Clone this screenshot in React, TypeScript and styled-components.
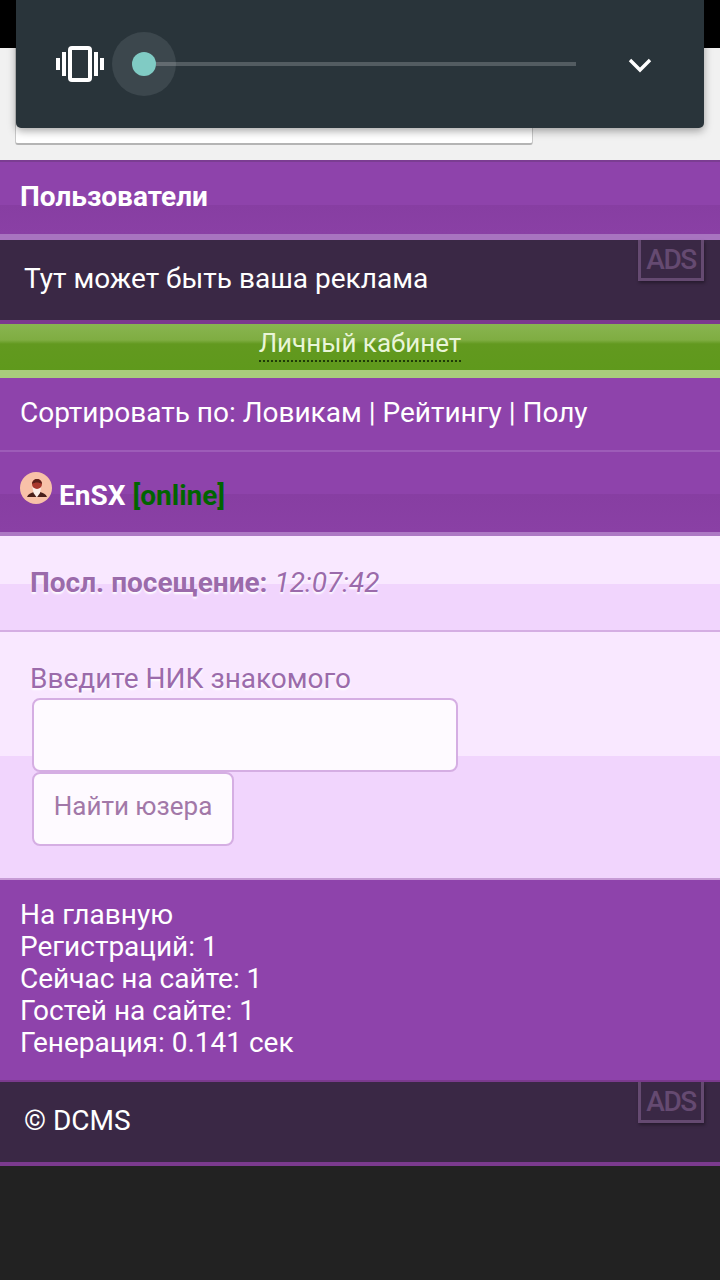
import styled, { createGlobalStyle } from 'styled-components';

const Global = createGlobalStyle`
  html, body { margin: 0; padding: 0; background: #222222; }
  * { box-sizing: border-box; }
  body { font-family: Roboto, "Noto Sans", sans-serif; }
`;

const Page = styled.div`
  position: relative;
  width: 720px;
  height: 1280px;
  overflow: hidden;
  background: #222222;
  color: #fff;
`;

const StatusBar = styled.div`
  height: 48px;
  background: #000;
`;

const SearchArea = styled.div`
  height: 112px;
  background: #f1f1f1;
  padding: 0 187px 0 15px;
`;

const SearchField = styled.div`
  height: 97px;
  background: #fff;
  border: 1px solid #c8c8c8;
  border-top: 0;
  border-bottom: 2px solid #b4b4b4;
  border-radius: 0 0 3px 3px;
`;

const VolumePanel = styled.div`
  position: absolute;
  top: 0;
  left: 16px;
  width: 688px;
  height: 128px;
  background: #29343a;
  border-radius: 0 0 5px 5px;
  box-shadow: 0 3px 8px rgba(0, 0, 0, 0.35);
  display: flex;
  align-items: center;
  padding-left: 40px;
`;

const Slider = styled.div`
  position: relative;
  width: 464px;
  height: 4px;
  margin-left: 8px;
  flex: none;
`;

const Halo = styled.div`
  position: absolute;
  left: 0;
  top: -30px;
  width: 64px;
  height: 64px;
  border-radius: 50%;
  background: #3c474d;
  display: flex;
  align-items: center;
  justify-content: center;
`;

const Thumb = styled.div`
  width: 24px;
  height: 24px;
  border-radius: 50%;
  background: #80cbc4;
`;

const SliderLine = styled.div`
  position: absolute;
  left: 44px;
  top: 0;
  right: 0;
  height: 4px;
  background: rgba(255, 255, 255, 0.2);
`;

const Chevron = styled.svg`
  margin-left: 52px;
  margin-top: 2px;
  flex: none;
`;

const Header = styled.div`
  height: 74px;
  border-top: 2px solid #7b3d92;
  background: linear-gradient(#8e43ab 0 43px, #873ea2 43px, #8a40a5 100%);
  padding: 19px 20px 0;
  font-size: 28px;
  line-height: 32px;
  font-weight: 700;
`;

const Strip = styled.div<{ $h: number; $c: string }>`
  height: ${(p) => p.$h}px;
  background: ${(p) => p.$c};
`;

const Banner = styled.div`
  position: relative;
  height: 80px;
  background: #3a2845;
  padding: 0 0 3px 24px;
  display: flex;
  align-items: center;
  font-size: 28px;
`;

const AdsBadge = styled.div`
  position: absolute;
  top: 0;
  right: 16px;
  width: 66px;
  height: 41px;
  border: 3px solid #654a71;
  border-top: 0;
  box-shadow: 1px 2px 3px rgba(0, 0, 0, 0.35);
  color: #654a71;
  font-size: 28px;
  font-weight: 500;
  letter-spacing: -1.5px;
  line-height: 40px;
  text-align: center;
`;

const CabinetBar = styled.div`
  height: 46px;
  background: linear-gradient(#89b550 0, #7fad42 16px, #62991f 20px, #5f991c 100%);
  text-align: center;
  font-size: 26px;
  line-height: 38px;
  color: #e9f5d8;
`;

const CabinetLink = styled.span`
  display: inline-block;
  height: 38px;
  border-bottom: 2px dotted #1f3a08;
`;

const SortRow = styled.div`
  height: 72px;
  background: #8e43ab;
  padding-left: 20px;
  font-size: 28px;
  line-height: 70px;
`;

const UserRow = styled.div`
  height: 80px;
  background: linear-gradient(#8e43ab 0 42px, #873ea2 42px, #8a40a5 100%);
  padding: 20px 0 0 20px;
  display: flex;
  font-size: 28px;
  font-weight: 700;
`;

const Nick = styled.span`
  margin-left: 7px;
  line-height: 47px;
`;

const Online = styled.span`
  margin-left: 7px;
  line-height: 47px;
  color: #006400;
`;

const LightBlock = styled.div<{ $h: number; $split: number }>`
  height: ${(p) => p.$h}px;
  background: linear-gradient(#f9e8ff 0 ${(p) => p.$split}px, #f1d5fd ${(p) => p.$split}px 100%);
  color: #9b6bab;
  font-size: 28px;
  text-shadow: 0 2px 2px #fff;
`;

const SeenLine = styled.div`
  padding: 31px 0 0 30px;
  line-height: 32px;
  b { font-weight: 700; }
  i { font-weight: 400; }
`;

const FindForm = styled.div`
  padding: 30px 0 0 30px;
`;

const FindLabel = styled.div`
  line-height: 34px;
  height: 36px;
`;

const FindInput = styled.div`
  margin-left: 2px;
  width: 426px;
  height: 74px;
  background: #fefaff;
  border: 2px solid #d5aee3;
  border-radius: 8px;
`;

const FindButton = styled.div`
  margin-left: 2px;
  width: 202px;
  height: 74px;
  padding-bottom: 6px;
  background: #fefaff;
  border: 2px solid #d5aee3;
  border-radius: 8px;
  color: #a278a8;
  text-shadow: none;
  display: flex;
  align-items: center;
  justify-content: center;
  font-size: 26px;
`;

const Stats = styled.div`
  height: 200px;
  background: #8e43ab;
  padding: 19px 0 0 20px;
  font-size: 28px;
  line-height: 32px;
`;

function VibrateIcon() {
  return (
    <svg width="48" height="36" viewBox="0 0 48 36" fill="none">
      <rect x="0" y="12" width="4" height="12" fill="#fff" />
      <rect x="6" y="6" width="4" height="24" fill="#fff" />
      <rect x="14" y="2" width="20" height="32" rx="2" stroke="#fff" strokeWidth="4" />
      <rect x="38" y="6" width="4" height="24" fill="#fff" />
      <rect x="44" y="12" width="4" height="12" fill="#fff" />
    </svg>
  );
}

function Avatar() {
  return (
    <svg width="32" height="32" viewBox="0 0 32 32">
      <circle cx="16" cy="16" r="16" fill="#f8c1a8" />
      <path d="M7 25c1-3 4-4 7-5h6c3 1 6 2 7 5z" fill="#4a1f1a" />
      <path d="M12.5 15h8.5l-1 6-3.2 4.5L13.5 21z" fill="#fbeee8" />
      <circle cx="17" cy="12" r="5" fill="#a8382e" />
      <path d="M12 12a5 5 0 0 1 10 0c-3-2-7-2-10 0z" fill="#5a1f1a" />
    </svg>
  );
}

export default function App() {
  return (
    <Page>
      <Global />
      <StatusBar />
      <SearchArea>
        <SearchField />
      </SearchArea>
      <VolumePanel>
        <VibrateIcon />
        <Slider>
          <Halo>
            <Thumb />
          </Halo>
          <SliderLine />
        </Slider>
        <Chevron width="24" height="16" viewBox="0 0 24 16" fill="none">
          <path d="M2 3l10 10L22 3" stroke="#fff" strokeWidth="3.4" />
        </Chevron>
      </VolumePanel>
      <Header>Пользователи</Header>
      <Strip $h={6} $c="#a874c0" />
      <Banner>
        Тут может быть ваша реклама
        <AdsBadge>ADS</AdsBadge>
      </Banner>
      <Strip $h={4} $c="#7b3a8e" />
      <CabinetBar>
        <CabinetLink>Личный кабинет</CabinetLink>
      </CabinetBar>
      <Strip $h={8} $c="#a9cc7c" />
      <SortRow>Сортировать по: Ловикам | Рейтингу | Полу</SortRow>
      <Strip $h={2} $c="#9d5cb8" />
      <UserRow>
        <Avatar />
        <Nick>EnSX</Nick>
        <Online>[online]</Online>
      </UserRow>
      <Strip $h={4} $c="#ad79c4" />
      <LightBlock $h={94} $split={48}>
        <SeenLine>
          <b>Посл. посещение:</b> <i>12:07:42</i>
        </SeenLine>
      </LightBlock>
      <Strip $h={2} $c="#d5aee3" />
      <LightBlock $h={246} $split={124}>
        <FindForm>
          <FindLabel>Введите НИК знакомого</FindLabel>
          <FindInput />
          <FindButton>Найти юзера</FindButton>
        </FindForm>
      </LightBlock>
      <Strip $h={2} $c="#c79bd6" />
      <Stats>
        На главную
        <br />
        Регистраций: 1
        <br />
        Сейчас на сайте: 1
        <br />
        Гостей на сайте: 1
        <br />
        Генерация: 0.141 сек
      </Stats>
      <Strip $h={2} $c="#7b3a8e" />
      <Banner>
        © DCMS
        <AdsBadge>ADS</AdsBadge>
      </Banner>
      <Strip $h={4} $c="#7b3a8e" />
    </Page>
  );
}
